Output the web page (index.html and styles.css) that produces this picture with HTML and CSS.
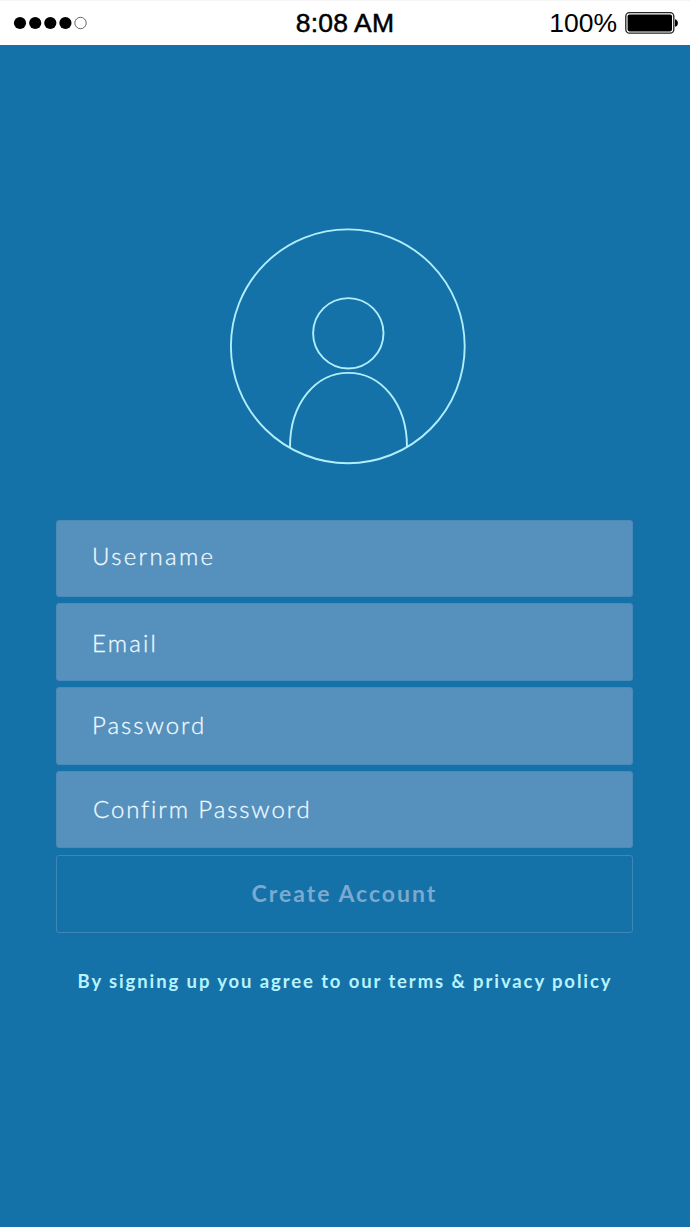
FILE: index.html
```html
<!DOCTYPE html>
<html lang="en">
<head>
<meta charset="utf-8">
<title>Create Account</title>
<link rel="stylesheet" href="styles.css">
</head>
<body>
<header class="status">
  <svg class="signal" width="76" height="16" viewBox="0 0 76 16">
    <circle cx="7" cy="8" r="6.1"/><circle cx="22.2" cy="8" r="6.1"/><circle cx="37.3" cy="8" r="6.1"/><circle cx="52.4" cy="8" r="6.1"/>
    <circle cx="67.5" cy="8" r="5.7" fill="#fff" stroke="#555" stroke-width=".9"/>
  </svg>
  <span class="time">8:08 AM</span>
  <div class="power">
    <span class="percent">100%</span>
    <svg width="54" height="24" viewBox="0 0 54 24">
      <rect x=".8" y="1.6" width="48" height="20.6" rx="3.6" fill="#fff" stroke="#222" stroke-width="1.3"/>
      <rect x="2.6" y="3.4" width="44.4" height="17" rx="1.8"/>
      <path d="M50 8.2c2 .5 2.9 2 2.9 3.8s-.9 3.3-2.9 3.8z"/>
    </svg>
  </div>
</header>
<main class="signup">
  <svg class="avatar" width="240" height="240" viewBox="0 0 240 240">
    <circle cx="119.800" cy="120.300" r="116.900"/>
    <circle cx="120.3" cy="107.3" r="35.2"/>
    <path d="M62 221C62 177 88 146.900 120.300 146.900S179 177 179 221"/>
  </svg>
  <form class="form">
    <div class="field username"><span>Username</span></div>
    <div class="field email"><span>Email</span></div>
    <div class="field password"><span>Password</span></div>
    <div class="field confirm"><span>Confirm Password</span></div>
    <button class="create" type="button">Create Account</button>
  </form>
  <p class="terms">By signing up you agree to our terms &amp; privacy policy</p>
</main>
</body>
</html>
```
FILE: styles.css
```css
* { box-sizing: border-box; }
body {
  margin: 0;
  height: 1227px;
  overflow: hidden;
  background: #1572a8;
  font-family: Lato, sans-serif;
}
.status {
  display: grid;
  grid-template-columns: 1fr auto 1fr;
  align-items: center;
  height: 45px;
  padding: 0 11px 1px 13px;
  background: #fff;
  border-top: 1px solid #f5f5f5;
  font: 26px/43px "Liberation Sans", sans-serif;
  color: #000;
}
.signal { display: block; }
.time {
  margin-right: 2px;
  padding-top: 2px;
  font-size: 26.500px;
  line-height: 41px;
  letter-spacing: .15px;
  -webkit-text-stroke: .5px #000;
}
.percent {
  padding-top: 2px;
  font-size: 26.500px;
  line-height: 41px;
}
.power {
  display: flex;
  justify-content: flex-end;
  align-items: center;
  gap: 8px;
}
.signup {
  display: flex;
  flex-direction: column;
  align-items: center;
}
.avatar {
  margin: 181px 0 0 6px;
  fill: none;
  stroke: #b0eefc;
  stroke-width: 1.9;
}
.form {
  display: flex;
  flex-direction: column;
  gap: 6.200px;
  width: 577px;
  margin: 53.800px 1px 0 0;
}
.field {
  height: 77.500px;
  padding-left: 35px;
  background: #5690bc;
  border: 1px solid #4b8ab9;
  border-radius: 3px;
  color: #effaff;
  font-size: 24px;
  font-weight: 300;
  line-height: 70px;
  letter-spacing: 2.350px;
  white-space: nowrap;
  -webkit-text-stroke: .3px #effaff;
}
.email { line-height: 78px; letter-spacing: 2.200px; }
.password { line-height: 74px; letter-spacing: 2px; }
.confirm { line-height: 74px; padding-left: 36px; letter-spacing: 1.880px; }
.create {
  height: 78px;
  padding: 0 0 1px;
  background: transparent;
  border: 1px solid #3e86b8;
  border-radius: 3px;
  color: #7ba9cf;
  font: 700 23px/75px Lato, sans-serif;
  letter-spacing: 2px;
}
.terms {
  margin: 34px 0 0;
  color: #b9f2ff;
  font-size: 18.500px;
  font-weight: 700;
  line-height: 28px;
  letter-spacing: 1.890px;
  white-space: nowrap;
}
```
